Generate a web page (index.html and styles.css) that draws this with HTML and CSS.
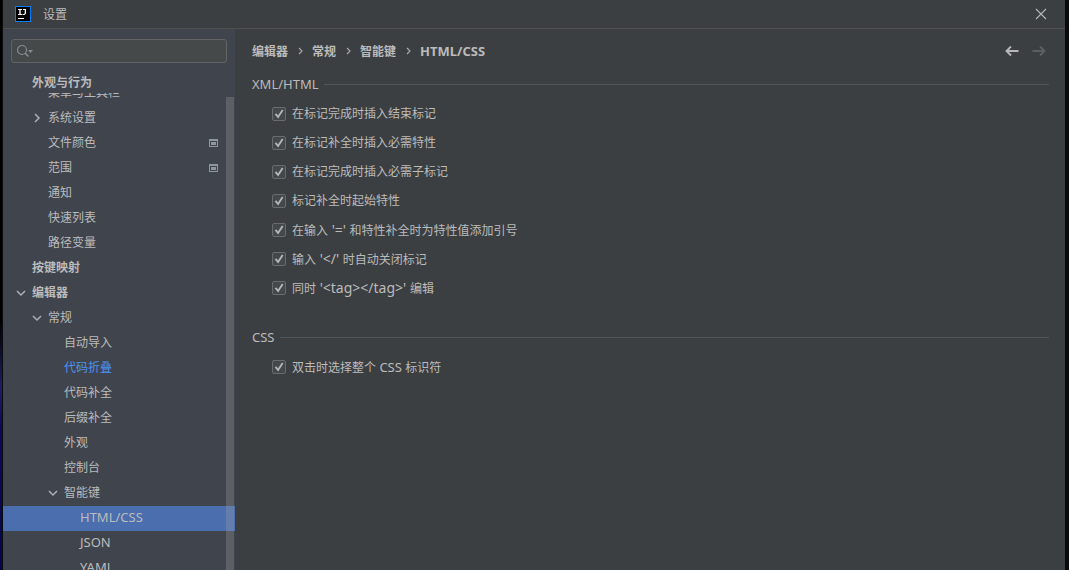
FILE: index.html
```html
<!DOCTYPE html>
<html lang="zh-CN">
<head>
<meta charset="utf-8">
<title>设置</title>
<link rel="stylesheet" href="styles.css">
</head>
<body>
<svg class="defs" width="0" height="0" aria-hidden="true">
  <symbol id="right" viewBox="0 0 16 16"><path d="M6 4l4 4-4 4" fill="none" stroke="#adb0b3" stroke-width="1.5"/></symbol>
  <symbol id="down" viewBox="0 0 16 16"><path d="M4 6l4 4 4-4" fill="none" stroke="#adb0b3" stroke-width="1.5"/></symbol>
  <symbol id="project" viewBox="0 0 9 8"><path d="M0 0h9v8H0zM1 2v5h7V2z" fill="#8d979f" fill-rule="evenodd"/><path d="M2 3h5v3H2z" fill="#8d979f"/></symbol>
  <symbol id="sep" viewBox="0 0 8 10"><path d="M2 2l3 3-3 3" fill="none" stroke="#a5a7a9" stroke-width="1.2"/></symbol>
  <symbol id="tick" viewBox="0 0 14 14"><path d="M3.500 6.800l2.600 3.200 4.600-7" fill="none" stroke="#b4b6b7" stroke-width="1.900"/></symbol>
</svg>
<div class="window">
  <header class="titlebar">
    <svg class="logo" width="16" height="16" viewBox="0 0 16 16" aria-hidden="true">
      <path d="M0 0h16v16H0z" fill="#087cfa"/><path d="M1 1h14v14H1z" fill="#000"/>
      <path d="M3 3h4v1H5.700v4H7v1H3V8h1.300V4H3zM8 3h3v4.500L9.500 9H7.500V8H9l.7-.7V4H8zM3 12h6v1H3z" fill="#fff"/>
    </svg>
    <h1 class="title">设置</h1>
    <button class="icon-button" type="button" aria-label="关闭">
      <svg width="12" height="12" viewBox="0 0 12 12"><path d="M1 1l10 10M11 1L1 11" stroke="#b4b6b7" stroke-width="1.1"/></svg>
    </button>
  </header>
  <div class="body">
    <aside class="sidebar">
      <div class="search">
        <svg width="18" height="14" viewBox="0 0 18 14" aria-hidden="true"><circle cx="6" cy="6" r="4.500" fill="none" stroke="#858b91" stroke-width="1.200"/><path d="M9 9l3.500 3.500" stroke="#858b91" stroke-width="1.500"/><path d="M12 6h5l-2.500 3z" fill="#858b91"/></svg>
        <input class="search-input" type="text" aria-label="搜索">
      </div>
      <div class="tree-header">外观与行为</div>
      <div class="tree-view">
        <ul class="tree">
          <li class="row level-2">菜单与工具栏</li>
          <li class="row level-2"><svg class="arrow"><use href="#right"/></svg>系统设置</li>
          <li class="row level-2">文件颜色<svg class="mark"><use href="#project"/></svg></li>
          <li class="row level-2">范围<svg class="mark"><use href="#project"/></svg></li>
          <li class="row level-2">通知</li>
          <li class="row level-2">快速列表</li>
          <li class="row level-2">路径变量</li>
          <li class="row level-1">按键映射</li>
          <li class="row level-1"><svg class="arrow"><use href="#down"/></svg>编辑器</li>
          <li class="row level-2"><svg class="arrow"><use href="#down"/></svg>常规</li>
          <li class="row level-3">自动导入</li>
          <li class="row level-3 modified">代码折叠</li>
          <li class="row level-3">代码补全</li>
          <li class="row level-3">后缀补全</li>
          <li class="row level-3">外观</li>
          <li class="row level-3">控制台</li>
          <li class="row level-3"><svg class="arrow"><use href="#down"/></svg>智能键</li>
          <li class="row level-4 selected">HTML/CSS</li>
          <li class="row level-4">JSON</li>
          <li class="row level-4">YAML</li>
        </ul>
        <div class="scrollbar"></div>
      </div>
    </aside>
    <main class="content">
      <div class="topline">
        <nav class="crumbs" aria-label="路径">
          <a class="crumb">编辑器</a><svg class="sep"><use href="#sep"/></svg>
          <a class="crumb">常规</a><svg class="sep"><use href="#sep"/></svg>
          <a class="crumb">智能键</a><svg class="sep"><use href="#sep"/></svg>
          <span class="crumb latin">HTML/CSS</span>
        </nav>
        <div class="history">
          <button class="icon-button" type="button" aria-label="后退"><svg width="14" height="12" viewBox="0 0 14 12"><path d="M13.500 6H2M6 1.500L1.500 6 6 10.500" fill="none" stroke="#b5b7b8" stroke-width="1.900"/></svg></button>
          <button class="icon-button" type="button" aria-label="前进" disabled><svg width="14" height="12" viewBox="0 0 14 12"><path d="M.5 6H12M8 1.500L12.500 6 8 10.500" fill="none" stroke="#5c5f61" stroke-width="1.900"/></svg></button>
        </div>
      </div>
      <section class="group">
        <h2 class="group-title latin">XML/HTML</h2>
        <label class="option"><span class="box"><input type="checkbox" checked><svg><use href="#tick"/></svg></span><span>在标记完成时插入结束标记</span></label>
        <label class="option"><span class="box"><input type="checkbox" checked><svg><use href="#tick"/></svg></span><span>在标记补全时插入必需特性</span></label>
        <label class="option"><span class="box"><input type="checkbox" checked><svg><use href="#tick"/></svg></span><span>在标记完成时插入必需子标记</span></label>
        <label class="option"><span class="box"><input type="checkbox" checked><svg><use href="#tick"/></svg></span><span>标记补全时起始特性</span></label>
        <label class="option"><span class="box"><input type="checkbox" checked><svg><use href="#tick"/></svg></span><span>在输入<span class="code"> '=' </span>和特性补全时为特性值添加引号</span></label>
        <label class="option"><span class="box"><input type="checkbox" checked><svg><use href="#tick"/></svg></span><span>输入<span class="code"> '&lt;/' </span>时自动关闭标记</span></label>
        <label class="option"><span class="box"><input type="checkbox" checked><svg><use href="#tick"/></svg></span><span>同时<span class="code"> '&lt;tag&gt;&lt;/tag&gt;' </span>编辑</span></label>
      </section>
      <section class="group">
        <h2 class="group-title latin">CSS</h2>
        <label class="option"><span class="box"><input type="checkbox" checked><svg><use href="#tick"/></svg></span><span>双击时选择整个<span class="latin"> CSS </span>标识符</span></label>
      </section>
    </main>
  </div>
</div>
</body>
</html>
```
FILE: styles.css
```css
* { box-sizing: border-box; }

body {
  margin: 0;
  padding: 0 4px 0 3px;
  height: 100vh;
  overflow: hidden;
  background: linear-gradient(#000 56%, #1c2060 68%, #0a0a5a 75%, #06064a) left / 2px 100% no-repeat #0a0a0c;
  color: #bbbbbb;
  font: 12px/16px "Noto Sans", "Noto Sans CJK SC", sans-serif;
}

.defs { position: absolute; }

.window {
  display: flex;
  flex-direction: column;
  height: 100%;
  background: #3c3f41;
}

.titlebar {
  display: flex;
  flex: none;
  align-items: center;
  height: 29px;
  padding: 0 18px 0 12px;
  border-bottom: 1px solid #515151;
}

.title {
  flex: 1;
  margin: 0 0 0 12px;
  padding-top: 2px;
  font-size: 12px;
  font-weight: 400;
}

.icon-button {
  display: flex;
  padding: 0;
  border: 0;
  background: none;
}

.body {
  display: flex;
  flex: 1;
  min-height: 0;
}

.sidebar {
  display: flex;
  flex: none;
  flex-direction: column;
  width: 232px;
  padding-top: 10px;
  background: #40444d;
}

.search {
  display: flex;
  flex: none;
  align-items: center;
  height: 24px;
  margin: 0 8px;
  padding: 0 4px;
  border: 1px solid #646464;
  border-radius: 3px;
  background: #45494a;
}

.search-input {
  flex: 1;
  min-width: 0;
  border: 0;
  outline: 0;
  background: none;
  color: inherit;
  font: inherit;
}

.tree-header {
  flex: none;
  height: 30px;
  padding: 12px 0 0 29px;
  font-weight: 700;
}

.tree-view {
  position: relative;
  flex: 1;
  min-height: 0;
  overflow: hidden;
}

.tree {
  margin: -12px 0 0;
  padding: 0;
  list-style: none;
}

.row {
  display: flex;
  align-items: center;
  height: 25px;
  padding-right: 17px;
  padding-bottom: 2px;
}

.level-1 { padding-left: 29px; font-weight: 700; }
.level-2 { padding-left: 45px; }
.level-3 { padding-left: 61px; }
.level-4 { padding-left: 77px; padding-bottom: 3px; font-size: 13px; }

.modified { color: #4c94f0; }
.selected { background: #4b6eaf; }

.arrow {
  width: 16px;
  height: 16px;
  margin-left: -19px;
  margin-right: 3px;
}

.mark {
  width: 9px;
  height: 8px;
  margin-left: auto;
}

.scrollbar {
  position: absolute;
  top: 4px;
  right: 1px;
  bottom: 0;
  width: 8px;
  background: rgba(166, 166, 166, 0.28);
}

.latin { font-size: 13px; }

.code {
  font-size: 14px;
  white-space: pre;
}

.content {
  flex: 1;
  min-width: 0;
  padding: 12px 16px 0 17px;
}

.topline,
.history {
  display: flex;
  align-items: center;
}

.crumbs {
  display: flex;
  align-items: baseline;
}

.topline { height: 20px; justify-content: space-between; }
.crumb { font-weight: 700; }

.sep {
  width: 8px;
  height: 10px;
  margin: 0 7px 0 9px;
}

.history {
  gap: 13px;
  padding-right: 3px;
}

.group { margin: 13px 0 24px; }

.group-title {
  display: flex;
  align-items: center;
  gap: 5px;
  height: 20px;
  margin: 0 0 6px;
  font-weight: 400;
}

.group-title::after {
  content: "";
  flex: 1;
  height: 1px;
  background: #515557;
}

.option {
  display: flex;
  align-items: center;
  gap: 6px;
  height: 29px;
  padding: 0 0 1px 20px;
}

.box {
  position: relative;
  display: flex;
}

.box input {
  appearance: none;
  width: 14px;
  height: 14px;
  margin: 0;
  border: 1px solid #6b6b6b;
  border-radius: 2px;
  background: #43494a;
}

.box svg {
  position: absolute;
  inset: 0;
  width: 14px;
  height: 14px;
  pointer-events: none;
}
```
